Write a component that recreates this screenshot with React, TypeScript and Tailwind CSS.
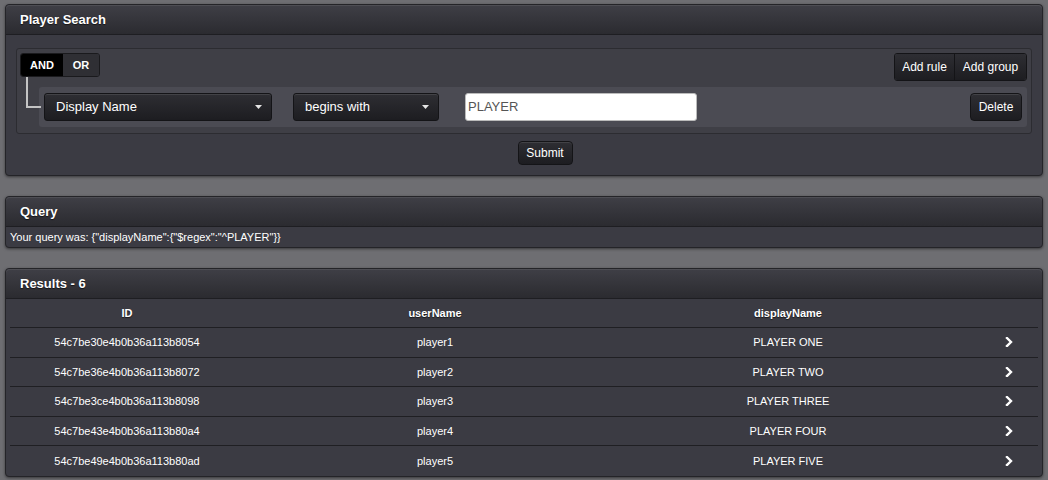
import React from "react";

const rows = [
  ["54c7be30e4b0b36a113b8054", "player1", "PLAYER ONE"],
  ["54c7be36e4b0b36a113b8072", "player2", "PLAYER TWO"],
  ["54c7be3ce4b0b36a113b8098", "player3", "PLAYER THREE"],
  ["54c7be43e4b0b36a113b80a4", "player4", "PLAYER FOUR"],
  ["54c7be49e4b0b36a113b80ad", "player5", "PLAYER FIVE"],
];

function Caret() {
  return (
    <svg width="7" height="4" viewBox="0 0 7 4" className="shrink-0">
      <path d="M0 0 L7 0 L3.5 4 Z" fill="#e5e5e5" />
    </svg>
  );
}

function Chevron() {
  return (
    <svg width="8" height="10" viewBox="0 0 8 10">
      <path d="M2 1 L6 5 L2 9" stroke="#ffffff" strokeWidth="2.4" fill="none" strokeLinecap="square" strokeLinejoin="miter" />
    </svg>
  );
}

function PanelHeader({ title }: { title: string }) {
  return (
    <div className="h-[30px] flex items-center px-[14px] bg-gradient-to-b from-[#3f3f46] to-[#2b2b30] border-b border-[#1e1e22] rounded-t-[4px] shadow-[inset_0_1px_0_rgba(255,255,255,0.08)]">
      <span className="text-[13px] font-bold text-white [text-shadow:0_1px_1px_rgba(0,0,0,0.6)]">{title}</span>
    </div>
  );
}

const btn =
  "bg-gradient-to-b from-[#2e2e33] to-[#1d1d21] border border-[#141417] text-white text-[12px] shadow-[inset_0_1px_0_rgba(255,255,255,0.1)]";

export default function App() {
  return (
    <div
      className="w-[1048px] h-[480px] overflow-hidden bg-[#6e6e72] pt-[4px] pl-[5px] flex flex-col gap-[20px]"
      style={{ fontFamily: '"Liberation Sans", Arial, sans-serif' }}
    >
      {/* Player Search */}
      <div className="w-[1038px] rounded-[4px] bg-[#3b3b43] border border-[#242428] shadow-[0_1px_3px_rgba(0,0,0,0.5)]">
        <PanelHeader title="Player Search" />
        <div className="pt-[13px] pl-[10px] pr-[10px] pb-[10px] flex flex-col">
          <div className="relative rounded-[3px] border border-[#2c2c31] bg-[#3f3f46] pt-[4px] pl-[3px] pr-[4px] pb-[6px] flex flex-col">
            <div className="flex justify-between items-start">
              <div className="flex h-[24px] rounded-[3px] border border-[#1a1a1d] overflow-hidden text-[11px] font-bold text-white">
                <div className="bg-black w-[42px] flex items-center justify-center">AND</div>
                <div className="bg-[#2f2f34] w-[36px] flex items-center justify-center">OR</div>
              </div>
              <div className="flex h-[28px] rounded-[3px] overflow-hidden border border-[#141417] text-white text-[12px]">
                <div className="bg-gradient-to-b from-[#2e2e33] to-[#1d1d21] w-[60px] flex items-center justify-center border-r border-[#141417]">Add rule</div>
                <div className="bg-gradient-to-b from-[#2e2e33] to-[#1d1d21] w-[71px] flex items-center justify-center">Add group</div>
              </div>
            </div>
            <div className="absolute left-[9px] top-[28px] w-[15px] h-[31px] border-l-2 border-b-2 border-[#c4c4c4]" />
            <div className="ml-[19px] mt-[6px] h-[40px] rounded-[3px] bg-[#4b4b53] flex items-center pl-[5px] pr-[5px]">
              <div className={`${btn} w-[228px] h-[28px] rounded-[3px] flex items-center justify-between pl-[11px] pr-[9px]`}>
                <span className="text-[13px]">Display Name</span>
                <Caret />
              </div>
              <div className={`${btn} ml-[21px] w-[146px] h-[28px] rounded-[3px] flex items-center justify-between pl-[11px] pr-[9px]`}>
                <span className="text-[13px]">begins with</span>
                <Caret />
              </div>
              <div className="ml-[26px] w-[232px] h-[28px] bg-white rounded-[3px] border border-[#bbbbbb] flex items-center pl-[2px] text-[13px] text-[#555]">
                PLAYER
              </div>
              <div className="flex-1" />
              <div className={`${btn} w-[52px] h-[28px] rounded-[4px] flex items-center justify-center`}>Delete</div>
            </div>
          </div>
          <div className="flex justify-center mt-[7px] pl-[42px]">
            <div className={`${btn} w-[55px] h-[24px] rounded-[4px] flex items-center justify-center`}>Submit</div>
          </div>
        </div>
      </div>

      {/* Query */}
      <div className="w-[1038px] rounded-[4px] bg-[#3b3b43] border border-[#242428] shadow-[0_1px_3px_rgba(0,0,0,0.5)]">
        <PanelHeader title="Query" />
        <div className="h-[20px] flex items-center pl-[4px] text-[11px] text-white">
          {'Your query was: {"displayName":{"$regex":"^PLAYER"}}'}
        </div>
      </div>

      {/* Results */}
      <div className="w-[1038px] rounded-[4px] bg-[#3b3b43] border border-[#242428] shadow-[0_1px_3px_rgba(0,0,0,0.5)]">
        <PanelHeader title="Results - 6" />
        <div className="px-[4px] pb-[0px]">
          <div className="flex h-[29px] items-center text-[11px] font-bold text-white border-b border-[#1f1f23] [text-shadow:0_1px_1px_rgba(0,0,0,0.6)]">
            <div className="w-[234px] text-center">ID</div>
            <div className="w-[382px] text-center">userName</div>
            <div className="w-[324px] text-center">displayName</div>
            <div className="flex-1" />
          </div>
          {rows.map((r, i) => (
            <div
              key={r[0]}
              className={`flex h-[29.5px] items-center text-[11px] text-white ${i < rows.length - 1 ? "border-b border-[#1f1f23]" : ""}`}
            >
              <div className="w-[234px] text-center">{r[0]}</div>
              <div className="w-[382px] text-center">{r[1]}</div>
              <div className="w-[324px] text-center">{r[2]}</div>
              <div className="flex-1 flex justify-end pr-[25px]">
                <Chevron />
              </div>
            </div>
          ))}
        </div>
      </div>
    </div>
  );
}
